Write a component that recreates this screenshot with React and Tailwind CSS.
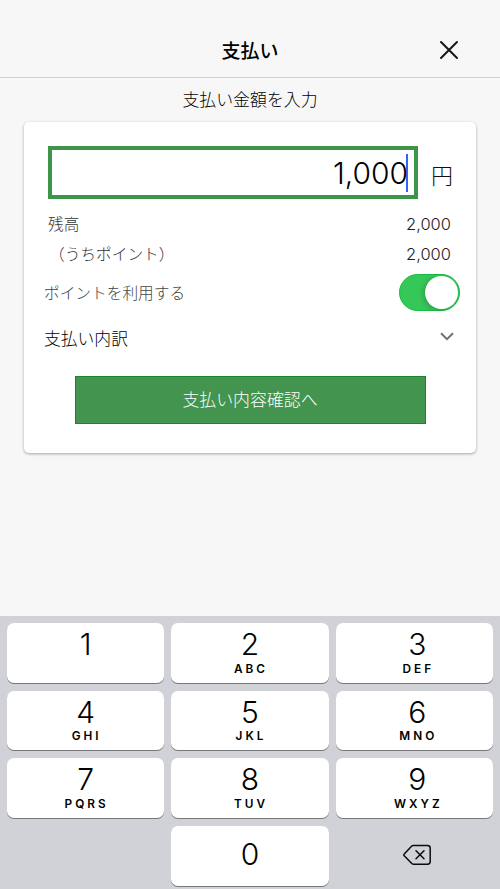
import { useState } from 'react';

const keys = [
  { digit: '1', letters: '' },
  { digit: '2', letters: 'ABC' },
  { digit: '3', letters: 'DEF' },
  { digit: '4', letters: 'GHI' },
  { digit: '5', letters: 'JKL' },
  { digit: '6', letters: 'MNO' },
  { digit: '7', letters: 'PQRS' },
  { digit: '8', letters: 'TUV' },
  { digit: '9', letters: 'WXYZ' },
];

const keyCls = 'h-[59.5px] rounded-[7px] bg-white shadow-[0_1px_0.5px_#77787c] flex flex-col items-center';

function Header() {
  return (
    <header className="h-[78px] shrink-0 border-b border-[#d0d2d1] grid grid-cols-[1fr_auto_1fr] items-center pt-[23px] pr-[41px]">
      <span />
      <h1 className="pl-[41px] pt-1 text-[19px] leading-6 font-medium text-black">支払い</h1>
      <button className="justify-self-end" aria-label="閉じる">
        <svg width="20" height="20" viewBox="0 0 20 20" fill="none" stroke="#161616" strokeWidth="2" strokeLinecap="round">
          <path d="M2 2 18 18M18 2 2 18" />
        </svg>
      </button>
    </header>
  );
}

function BalanceRow({ label, value, indent }) {
  return (
    <div className="h-[30px] flex items-center justify-between pl-6 pr-[25px]">
      <span className={`pt-[2px] text-[15.7px] font-light text-[#333] ${indent ? 'ml-px' : ''}`}>{label}</span>
      <span className="text-[16.5px] font-light text-[#1c1c1c]">{value}</span>
    </div>
  );
}

function Keypad({ onDigit, onDelete }) {
  return (
    <div className="h-[273px] shrink-0 bg-[#d1d2d8] grid grid-cols-3 gap-x-[7px] gap-y-[8.2px] content-start px-[7px] pt-[7px]">
      {keys.map((k, i) => (
        <button key={k.digit} className={`${keyCls} ${i % 3 === 2 ? 'pl-[6px]' : ''}`} onClick={() => onDigit(k.digit)}>
          <span className="mt-[6px] text-[30px] leading-[30px] font-[350] text-black">{k.digit}</span>
          <span className="mt-[2.5px] pl-[2px] text-[11.8px] leading-[14px] font-semibold tracking-[3px] text-black">{k.letters}</span>
        </button>
      ))}
      <span />
      <button className={`${keyCls} justify-center pb-[3px]`} onClick={() => onDigit('0')}>
        <span className="text-[30px] leading-[30px] font-[350] text-black">0</span>
      </button>
      <button className="flex items-center justify-center pl-[6px] pb-[2px]" onClick={onDelete} aria-label="削除">
        <svg width="28" height="22" viewBox="0 0 28 22" fill="none" stroke="#0a0a0a" strokeWidth="1.5" strokeLinecap="round" strokeLinejoin="round">
          <path d="M10.2 1.5H24.5a2.7 2.7 0 0 1 2.7 2.7V17.5a2.7 2.7 0 0 1-2.7 2.7H10.2a2 2 0 0 1-1.4-.6L1.2 11.8a1.2 1.2 0 0 1 0-1.7L8.8 2.1a2 2 0 0 1 1.4-.6Z" />
          <path d="m13 6.8 8 8M21 6.8l-8 8" />
        </svg>
      </button>
    </div>
  );
}

export default function App() {
  const [amount, setAmount] = useState('1000');
  const [usePoints, setUsePoints] = useState(true);

  return (
    <div className="w-[500px] h-[889px] flex flex-col overflow-hidden bg-[#f7f7f7] font-[Inter,'Noto_Sans_CJK_JP',sans-serif]">
      <Header />
      <main className="flex-1 px-6">
        <p className="h-11 pt-[10px] text-center text-[16.9px] leading-6 font-light text-black">支払い金額を入力</p>
        <section className="h-[331px] rounded-[5px] bg-white shadow-[0_1px_3px_rgba(0,0,0,0.35)] pt-6">
          <div className="flex items-center pl-6">
            <div className="w-[370px] h-[53px] border-4 border-[#3c9549] flex items-center justify-end pr-[6px]">
              <span className="text-[30px] leading-9 font-[350] text-black">{Number(amount).toLocaleString('en-US')}</span>
              <span className="-ml-[2px] w-[2px] h-[38px] bg-[#3362f5]" />
            </div>
            <span className="ml-[13px] pt-[6px] text-[22px] leading-8 font-light text-[#111]">円</span>
          </div>
          <div className="pt-[10px]">
            <BalanceRow label="残高" value="2,000" />
            <BalanceRow label="（うちポイント）" value="2,000" indent />
          </div>
          <div className="h-[47px] flex items-center justify-between pl-5 pr-4">
            <span className="pt-[2px] text-[15.7px] font-light text-[#444]">ポイントを利用する</span>
            <button
              role="switch"
              aria-checked={usePoints}
              onClick={() => setUsePoints(!usePoints)}
              className={`w-[61px] h-[37px] p-px rounded-full border flex items-center ${usePoints ? 'justify-end bg-[#36c759] border-[#1abb43]' : 'bg-gray-300 border-gray-300'}`}
            >
              <span className="size-[33px] rounded-full bg-white shadow-[-2px_1px_5px_rgba(0,0,0,0.2)]" />
            </button>
          </div>
          <div className="h-[45px] flex items-center justify-between pl-5 pr-[22px]">
            <span className="pt-[2px] text-[16.8px] font-light text-black">支払い内訳</span>
            <svg className="mb-[5px]" width="14" height="9" viewBox="0 0 14 9" fill="none" stroke="#707070" strokeWidth="2">
              <path d="m1 1.2 6 6 6-6" />
            </svg>
          </div>
          <button className="mx-auto mt-[15px] block w-[351px] h-[48px] pt-[2px] bg-[#43944e] border border-[#198729] text-[16.9px] font-light text-white">
            支払い内容確認へ
          </button>
        </section>
      </main>
      <Keypad
        onDigit={d => setAmount(a => (a + d).slice(0, 7))}
        onDelete={() => setAmount(a => a.slice(0, -1))}
      />
    </div>
  );
}
